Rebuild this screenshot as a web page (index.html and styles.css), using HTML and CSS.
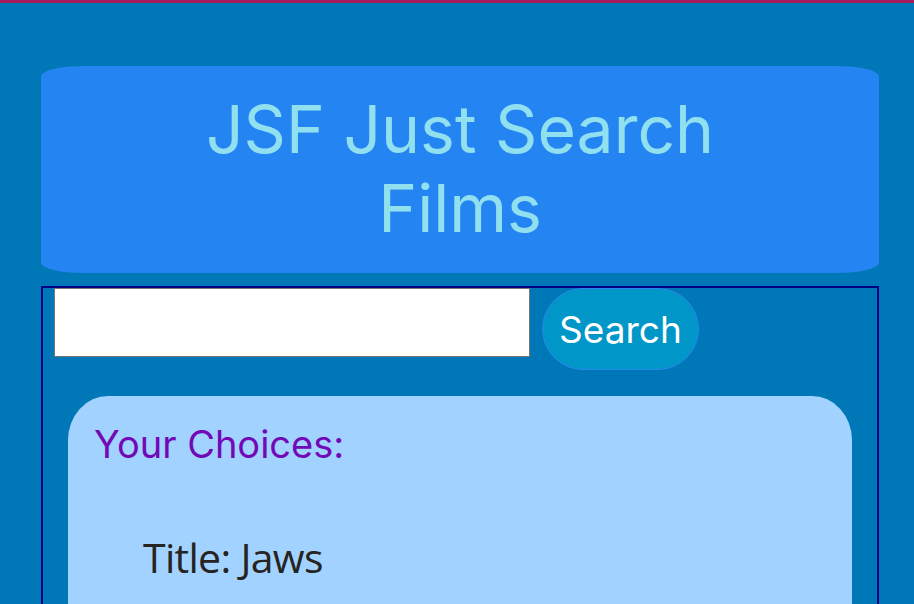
FILE: index.html
```html
<!DOCTYPE html>
<html lang="en">
<head>
<meta charset="utf-8">
<title>JSF Just Search Films</title>
<link rel="stylesheet" href="styles.css">
</head>
<body>
<header class="banner">
  <h1 class="banner-title">JSF Just Search<br>Films</h1>
</header>
<main class="panel">
  <form class="search-row">
    <input class="search-input" type="text" aria-label="Search films">
    <button class="search-button" type="button">Search</button>
  </form>
  <section class="choices">
    <h2 class="choices-title">Your Choices:</h2>
    <ul class="choices-list">
      <li class="choice">Title: Jaws</li>
    </ul>
  </section>
</main>
</body>
</html>
```
FILE: styles.css
```css
html {
  border-top: 3px solid #a81a5e;
  background: #0077b6;
}
body {
  margin: 0;
  padding: 63px 35px 0 41px;
  background: #0077b6;
  font-family: Inter, "Noto Sans", sans-serif;
}
.banner {
  height: 207px;
  background: #2484f2;
  border-radius: 5%;
  box-sizing: border-box;
  padding-top: 24px;
}
.banner-title {
  margin: 0;
  text-align: center;
  color: #90e0ef;
  font-weight: 400;
  font-size: 66px;
  line-height: 79px;
}
.panel {
  margin-top: 13px;
  border: 2px solid #000080;
  padding: 0 25px 40px 25px;
}
.search-row {
  display: flex;
  align-items: flex-start;
  gap: 12px;
  margin: 0 0 26px -14px;
}
.search-input {
  width: 476px;
  height: 69px;
  box-sizing: border-box;
  margin: 0;
  border: 1px solid #767676;
  background: #fff;
}
.search-button {
  width: 157px;
  height: 82px;
  box-sizing: border-box;
  border: 1px solid #2a86f0;
  border-radius: 41px;
  background: #0096c7;
  color: #fff;
  font-family: Inter, "Noto Sans", sans-serif;
  font-size: 37px;
  padding: 0;
}
.choices {
  background: #a2d2ff;
  border-radius: 40px / 44px;
  padding: 20px 26px 40px;
  min-height: 300px;
}
.choices-title {
  margin: 0;
  color: #7209b7;
  font-weight: 400;
  font-size: 38px;
  line-height: 56px;
}
.choices-list {
  list-style: none;
  margin: 57px 0 0;
  padding: 0 0 0 49px;
}
.choice {
  font-family: "Open Sans", sans-serif;
  font-size: 41px;
  color: #262320;
  letter-spacing: -0.7px;
}
```
